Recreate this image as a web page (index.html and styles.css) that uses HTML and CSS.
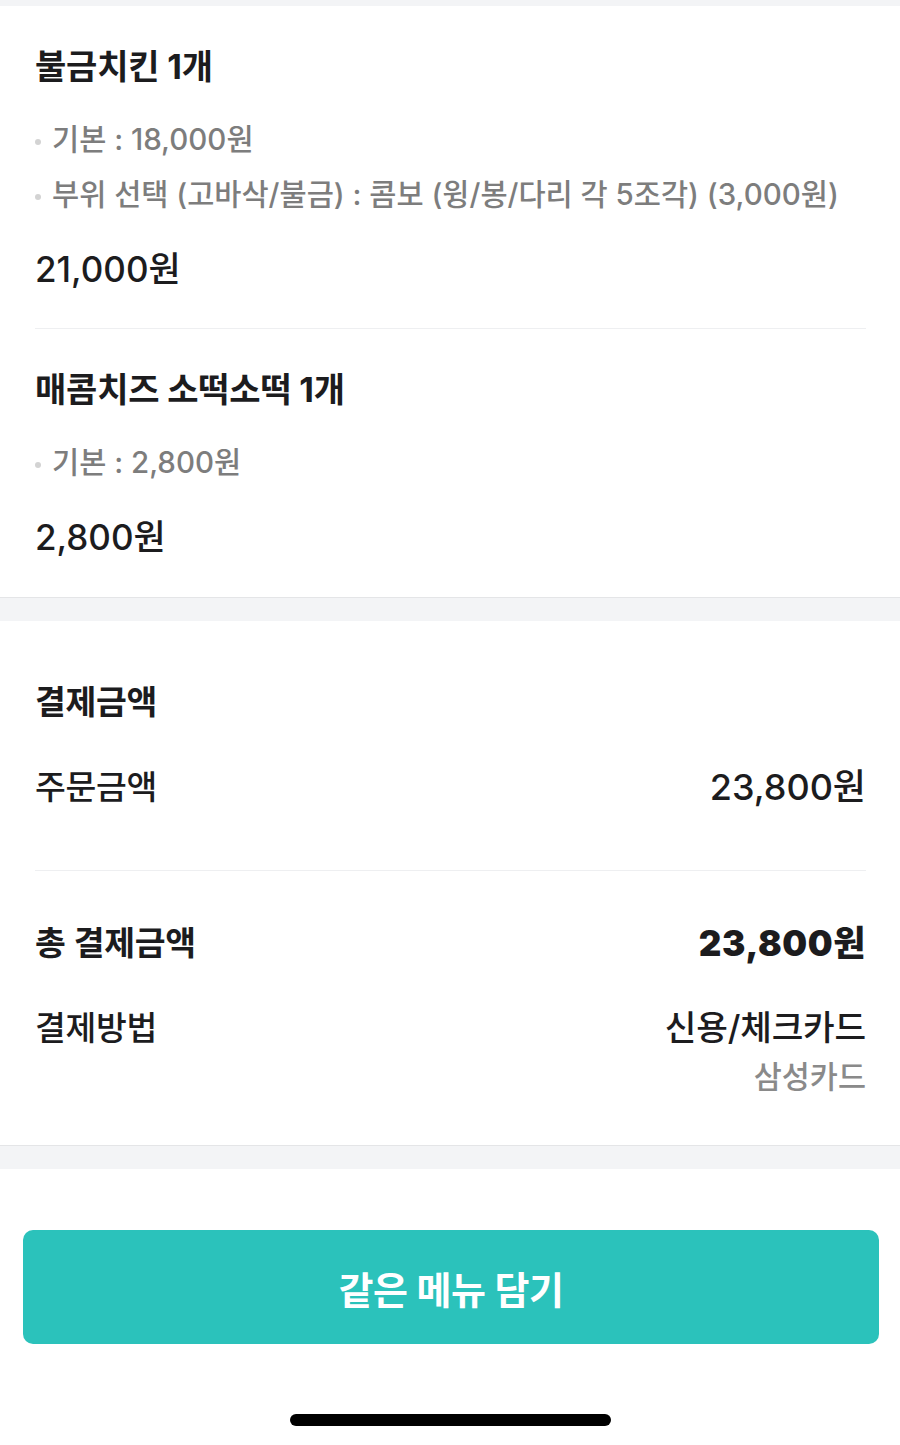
FILE: index.html
```html
<!DOCTYPE html>
<html lang="ko">
<head>
<meta charset="utf-8">
<link rel="stylesheet" href="styles.css">
</head>
<body>
<div class="page">
  <div class="band band-top"></div>
  <section class="card items">
    <div class="item">
      <div class="item-title">불금치킨 1개</div>
      <ul class="options">
        <li>기본 : 18,000원</li>
        <li>부위 선택 (고바삭/불금) : 콤보 (윙/봉/다리 각 5조각) (3,000원)</li>
      </ul>
      <div class="item-price">21,000원</div>
    </div>
    <div class="item">
      <div class="item-title">매콤치즈 소떡소떡 1개</div>
      <ul class="options">
        <li>기본 : 2,800원</li>
      </ul>
      <div class="item-price">2,800원</div>
    </div>
  </section>
  <div class="band"></div>
  <section class="card pay">
    <div class="pay-title">결제금액</div>
    <div class="row row-order">
      <span class="label">주문금액</span>
      <span class="value">23,800원</span>
    </div>
    <div class="row row-total">
      <span class="label">총 결제금액</span>
      <span class="value total">23,800원</span>
    </div>
    <div class="row row-method">
      <span class="label">결제방법</span>
      <span class="value method">
        <span class="method-main">신용/체크카드</span>
        <span class="method-sub">삼성카드</span>
      </span>
    </div>
  </section>
  <div class="band"></div>
  <div class="action">
    <button class="btn">같은 메뉴 담기</button>
  </div>
  <div class="home"><span class="home-bar"></span></div>
</div>
</body>
</html>
```
FILE: styles.css
```css
* { box-sizing: border-box; }
html, body { margin: 0; padding: 0; background: #fff; }
body {
  font-family: Inter, "Noto Sans CJK KR", sans-serif;
  color: #1c1c1e;
  width: 900px;
}
.page { display: flex; flex-direction: column; }
.band { height: 23px; background: #f3f4f6; }
.band-top { height: 6px; }
.card { background: #fff; border-bottom: 1px solid #e4e5e7; }

.items { padding: 0 34px 1px 35px; }
.item { padding: 41px 0 39px; }
.item + .item { border-top: 1px solid #eeeff1; }
.item-title {
  font-size: 34px; line-height: 40px; font-weight: 700;
  letter-spacing: -0.2px; color: #1c1c1e;
}
.options { list-style: none; margin: 25px 0 0; padding: 0; }
.options li {
  position: relative;
  font-size: 29.5px; line-height: 55px; color: #7d7d7d;
  letter-spacing: 0; padding-left: 17px; font-weight: 500;
}
.options li::before {
  content: ""; position: absolute; left: 0; top: 27px;
  width: 6px; height: 6px; border-radius: 50%; background: #d3d3d3;
}
.item-price {
  margin-top: 27px;
  font-size: 35px; line-height: 40px; font-weight: 500;
  letter-spacing: 0; color: #1c1c1e;
}

.pay { padding: 61px 34px 50px 35px; display: flex; flex-direction: column; }
.pay-title { font-size: 33.5px; line-height: 40px; font-weight: 700; letter-spacing: -0.3px; }
.row { display: flex; justify-content: space-between; align-items: flex-start; }
.row-order { margin-top: 45px; padding-bottom: 63px; border-bottom: 1px solid #eeeff1; }
.row-total { margin-top: 52px; }
.row-method { margin-top: 45px; }
.label { font-size: 33.5px; line-height: 40px; font-weight: 500; letter-spacing: -0.3px; }
.row-total .label { font-weight: 600; }
.value { font-size: 36px; line-height: 40px; font-weight: 500; letter-spacing: 0; text-align: right; }
.value.total { font-size: 35px; font-weight: 900; letter-spacing: 0.6px; }
.method { display: flex; flex-direction: column; align-items: flex-end; }
.method-main { font-size: 34.4px; letter-spacing: -0.2px; }
.method-sub { font-size: 30.5px; line-height: 36px; margin-top: 11px; color: #8a8a8a; font-weight: 500; }

.action { padding: 61px 21px 0 23px; }
.btn {
  display: block; width: 100%; height: 114px;
  border: none; border-radius: 10px; background: #2bc2bb;
  color: #fff; font-family: Inter, "Noto Sans CJK KR", sans-serif;
  font-size: 38px; font-weight: 600; letter-spacing: -0.5px;
}
.home { display: flex; justify-content: center; padding-top: 70px; }
.home-bar { width: 321px; height: 12px; border-radius: 6px; background: #000; }
```
